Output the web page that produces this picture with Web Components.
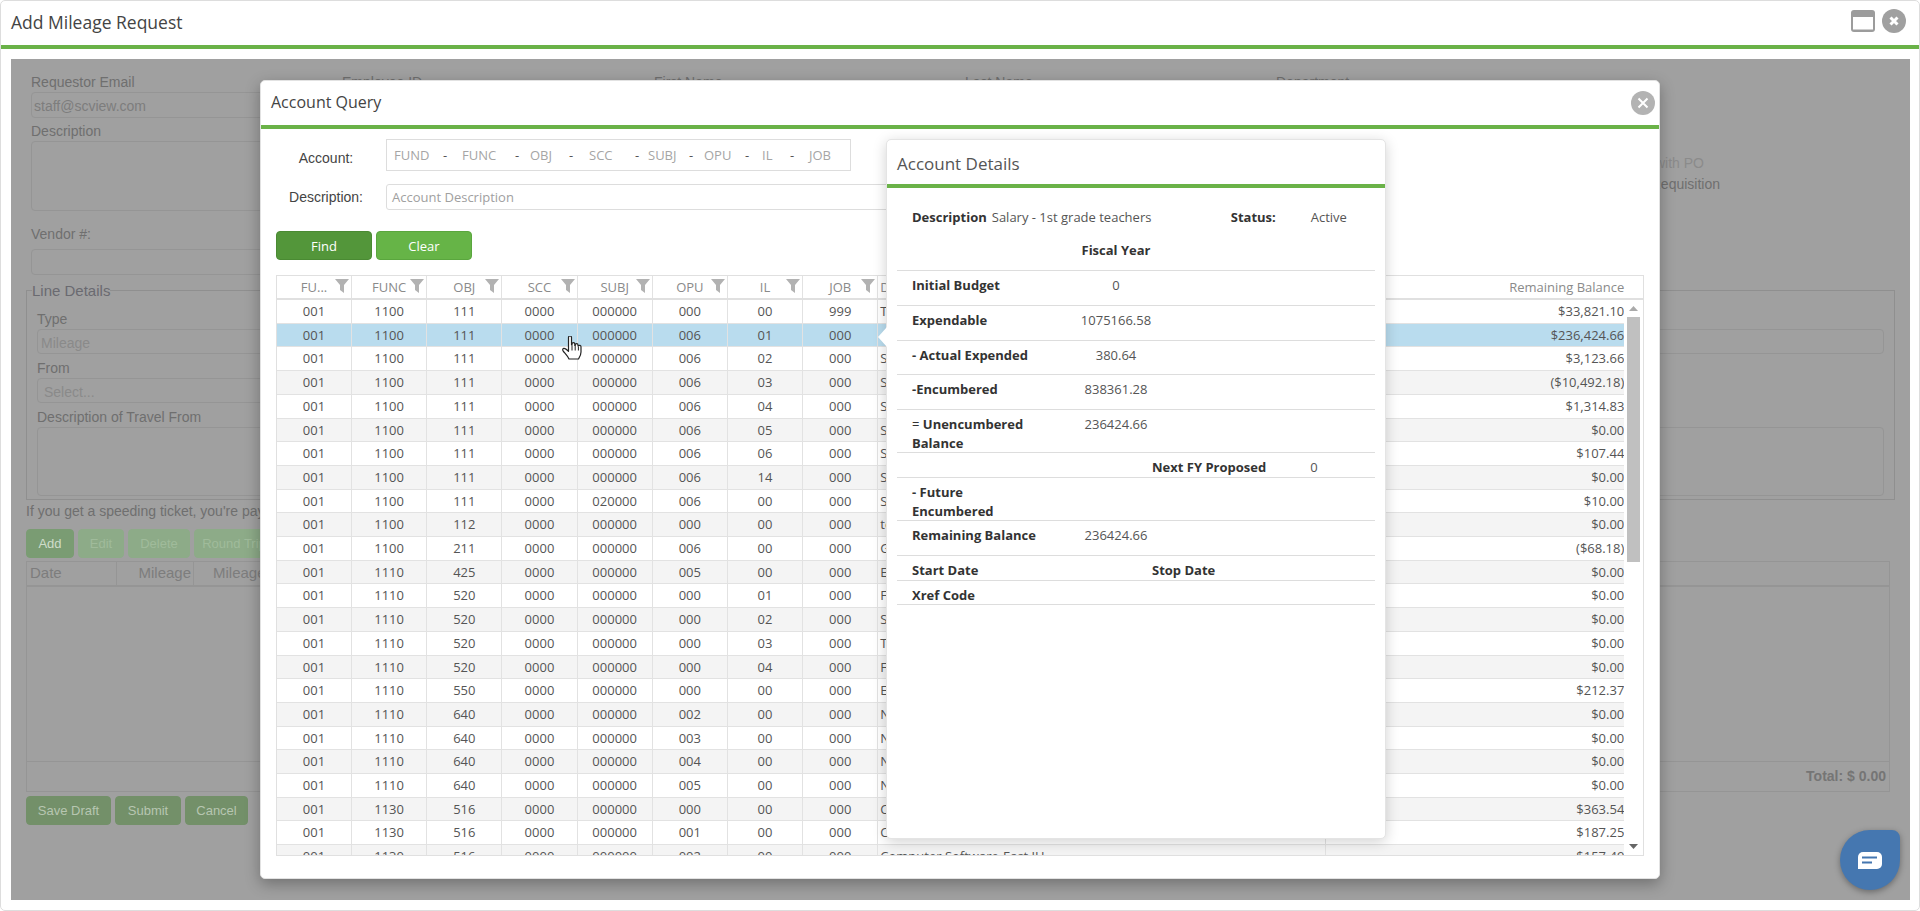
<!DOCTYPE html>
<html lang="en">
<head>
<meta charset="utf-8">
<title>Add Mileage Request</title>
<style>
  html, body { margin: 0; height: 100%; background: #fff; overflow: hidden; }
  body { font-family: "Open Sans", sans-serif; }
</style>
</head>
<body>
<app-window>
  <span slot="title">Add Mileage Request</span>
  <mileage-form></mileage-form>
  <account-query slot="overlay"></account-query>
  <chat-bubble slot="overlay"></chat-bubble>
</app-window>

<script>
class Base extends HTMLElement {
  constructor() {
    super();
    this.attachShadow({ mode: "open" });
  }
  connectedCallback() {
    this.shadowRoot.innerHTML = `<style>${this.constructor.css}</style>${this.render()}`;
  }
}

class AppWindow extends Base {
  render() {
    return `
      <header>
        <div class="title"><slot name="title"></slot></div>
        <svg width="24" height="22" viewBox="0 0 24 22"><rect width="24" height="22" rx="3" fill="#9c9c9c"/><rect x="2" y="7" width="20" height="12.500" fill="#fff"/></svg>
        <svg class="x" width="24" height="24" viewBox="0 0 24 24"><circle cx="12" cy="12" r="12" fill="#a0a0a0"/><path d="M8.500 8.500l7 7m0-7l-7 7" stroke="#fff" stroke-width="3"/></svg>
      </header>
      <main><slot></slot></main>
      <slot name="overlay"></slot>
    `;
  }
  static get css() {
    return `
      :host { display: flex; flex-direction: column; position: relative; box-sizing: border-box; height: 911px; border: 1px solid #ddd; border-radius: 5px; background: #fff; }
      header { height: 44px; flex: none; box-sizing: border-box; display: flex; align-items: center; padding: 0 13px 4px 10px; gap: 7px; }
      .title { flex: 1; font-size: 17.500px; color: #444; padding-top: 2px; }
      main { flex: 1; border-top: 4px solid #6ab248; padding: 10px 9px 10px 10px; display: flex; min-height: 0; }
    `;
  }
}

class GButton extends Base {
  render() { return `<slot></slot>`; }
  static get css() {
    return `
      :host { display: inline-flex; align-items: center; justify-content: center; box-sizing: border-box; height: 29px; border-radius: 4px; font-size: 13px; background: var(--bg, #66b447); color: var(--fg, #fff); border: 1px solid var(--edge, var(--bg, #5aa63e)); }
    `;
  }
}

class FormField extends Base {
  render() {
    const h = this.getAttribute("h") || 26;
    const gap = this.getAttribute("gap") || 0;
    return `<label>${this.getAttribute("label") || ""}</label><div class="box" style="height:${h}px;margin-top:${gap}px"><slot></slot></div>`;
  }
  static get css() {
    return `
      :host { display: block; font-family: "Liberation Sans", Arial, sans-serif; color: #6f6f6f; }
      label { display: block; height: 20px; line-height: 20px; font-size: 14px; }
      .box { box-sizing: border-box; border: 1px solid #959595; border-radius: 4px; font-size: 14px; padding: 2px 2px 0; display: flex; align-items: center; color: #7d7d7d; }
    `;
  }
}

class MileageForm extends Base {
  render() {
    return `
      <section class="top">
        <div class="stack">
          <form-field label="Requestor Email">staff@scview.com</form-field>
          <form-field label="Description" h="70"></form-field>
          <form-field class="vendor" label="Vendor #:" gap="5"></form-field>
        </div>
        <div class="lbl">Employee ID</div>
        <div class="lbl">First Name</div>
        <div class="lbl">Last Name</div>
        <div class="lbl">Department</div>
        <div class="req"><div class="faint">with PO</div><div>Requisition</div></div>
      </section>
      <fieldset>
        <legend>Line Details</legend>
        <div class="cols">
          <div>
            <form-field label="Type" h="25"><span class="ph">Mileage</span></form-field>
            <form-field label="From" h="25"><span class="ph sel">Select...</span></form-field>
            <form-field label="Description of Travel From" h="69"></form-field>
          </div>
          <div>
            <form-field h="25"></form-field>
            <form-field h="25" style="visibility:hidden"></form-field>
            <form-field h="69"></form-field>
          </div>
        </div>
      </fieldset>
      <p class="note">If you get a speeding ticket, you're paying</p>
      <div class="btns">
        <g-button style="width:48px;--bg:#7a9c73;--fg:#cfdccb">Add</g-button>
        <g-button style="width:46px;--bg:#8dab88;--fg:#a0bb9b">Edit</g-button>
        <g-button style="width:62px;--bg:#8dab88;--fg:#a0bb9b">Delete</g-button>
        <g-button style="width:80px;--bg:#8dab88;--fg:#a0bb9b">Round Trip</g-button>
      </div>
      <div class="tbl">
        <div class="head"><span style="width:90px;padding-left:3px">Date</span><span style="width:77px;text-align:right;padding-right:2px">Mileage</span><span style="padding-left:19px">Mileage</span></div>
        <div class="body"></div>
        <div class="total">Total: $ 0.00</div>
      </div>
      <div class="btns b2">
        <g-button style="width:85px;--bg:#739069;--fg:#b7c6b1">Save Draft</g-button>
        <g-button style="width:66px;--bg:#739069;--fg:#b7c6b1">Submit</g-button>
        <g-button style="width:63px;--bg:#739069;--fg:#b7c6b1">Cancel</g-button>
      </div>
    `;
  }
  static get css() {
    return `
      :host { display: block; flex: 1; background: #a0a0a0; font-family: "Liberation Sans", Arial, sans-serif; color: #6f6f6f; font-size: 14px; }
      .top { display: grid; grid-template-columns: 311px 312px 311px 311px 310px 134px; box-sizing: border-box; height: 222px; padding: 13px 0 0 20px; }
      .stack form-field + form-field { margin-top: 3px; }
      .stack .vendor { margin-top: 13px; }
      .lbl { line-height: 20px; }
      .req { text-align: right; padding-top: 81px; font-size: 14px; line-height: 21px; }
      .faint { color: #8b8b8b; padding-right: 16px; }
      fieldset { margin: 0 15px; padding: 10px 10px 3px; border: 1px solid #8f8f8f; min-width: 0; height: 219px; box-sizing: border-box; }
      legend { padding: 0; margin-left: -5px; height: 18px; line-height: 20px; font-size: 15px; color: #6a6a70; }
      .cols { display: grid; grid-template-columns: 1fr 1fr; }
      .cols form-field + form-field { margin-top: 4px; }
      .ph { color: #8a8a8a; font-size: 14px; padding-left: 1px; }
      .sel { padding-left: 4px; }
      .note { margin: 1px 0 0 15px; line-height: 20px; font-size: 14px; white-space: nowrap; }
      .btns { display: flex; gap: 4px; margin: 8px 0 0 15px; }
      .b2 { margin-top: 4px; }
      .tbl { margin: 3px 20px 0 15px; height: 231px; box-sizing: border-box; border: 1px solid #959595; display: flex; flex-direction: column; }
      .head { height: 25px; flex: none; box-sizing: border-box; border-bottom: 2px solid #959595; display: flex; align-items: center; font-size: 15px; }
      .head span { display: block; box-sizing: border-box; height: 100%; line-height: 22px; border-right: 1px solid #959595; color: #7d7d7d; }
      .head span:last-child { border: 0; }
      .body { flex: 1; border-bottom: 1px solid #959595; }
      .total { height: 29px; flex: none; line-height: 29px; text-align: right; padding-right: 3px; font-weight: bold; color: #757575; }
    `;
  }
}

const FIELDS = [["FUND", 49, 68], ["FUNC", 53, 68], ["OBJ", 39, 59], ["SCC", 46, 59], ["SUBJ", 41, 56], ["OPU", 41, 58], ["IL", 28, 47], ["JOB", 0, 0]];

class AccountQuery extends Base {
  render() {
    const segs = FIELDS.map(([name, off, w], i) => i < 7
      ? `<span style="width:${off}px">${name}</span><span class="dash" style="width:${w - off}px">-</span>`
      : `<span>${name}</span>`).join("");
    return `
      <header>
        <div class="title">Account Query</div>
        <svg width="24" height="24" viewBox="0 0 24 24"><circle cx="12" cy="12" r="12" fill="#b3b3b3"/><path d="M7.500 7.500l9 9m0-9l-9 9" stroke="#fff" stroke-width="2"/></svg>
      </header>
      <div class="content">
        <div class="row acct"><label>Account:</label><div class="segs">${segs}</div></div>
        <div class="row desc"><label>Description:</label><div class="in">Account Description</div></div>
        <div class="btns">
          <g-button style="width:96px;--bg:#53963a;--edge:#4a8a33">Find</g-button>
          <g-button style="width:96px;--bg:#66b447;--edge:#5aa63e">Clear</g-button>
        </div>
        <account-grid></account-grid>
      </div>
      <account-details></account-details>
      <svg class="hand" width="21" height="25" viewBox="0 0 21 25"><path d="M6.500 1.500a1.500 1.500 0 0 1 3 0V9h.5V8a1.400 1.400 0 0 1 2.800 0v1.500h.4V9a1.400 1.400 0 0 1 2.800 0v1h.4a1.400 1.400 0 0 1 2.600.7V16c0 3-1.500 5-2.500 7H7c-1-2.500-3-4.500-5.500-7.500-1.200-1.400-1-3 .3-3.200 1.200-.2 3 1.200 4.700 3z" fill="#fff" stroke="#222" stroke-width="1.200" stroke-linejoin="round"/><path d="M10 9.500v5M13.200 9.500v5M16.400 10.500v4" stroke="#222" fill="none"/></svg>
    `;
  }
  static get css() {
    return `
      :host { position: absolute; left: 259px; top: 79px; width: 1400px; height: 799px; box-sizing: border-box; background: #fff; border: 1px solid #e2e2e2; border-radius: 5px; box-shadow: 0 5px 15px rgba(0,0,0,.3); display: flex; flex-direction: column; }
      header { height: 44px; flex: none; border-bottom: 4px solid #6ab248; display: flex; align-items: center; padding: 0 4px 0 10px; box-sizing: content-box; }
      .title { flex: 1; font-size: 16px; color: #444; padding-bottom: 2px; }
      .content { padding: 10px 15px 0; display: flex; flex-direction: column; min-height: 0; }
      .row { display: flex; align-items: center; }
      label { width: 100px; margin-right: 10px; text-align: center; font: 14px "Liberation Sans", Arial, sans-serif; color: #444; }
      .acct label { padding-top: 6px; }
      .segs { box-sizing: border-box; width: 465px; height: 32px; border: 1px solid #ddd; display: flex; align-items: center; padding: 0 0 0 7px; font-size: 13px; color: #a5a5a5; }
      .dash { color: #555; }
      .desc { margin-top: 13px; }
      .in { box-sizing: border-box; width: 800px; height: 26px; line-height: 24px; border: 1px solid #ddd; border-radius: 3px; padding-left: 5px; font-size: 13px; color: #a0a0a0; }
      .btns { display: flex; gap: 4px; margin: 21px 0 15px; }
      account-grid { flex: none; }
      .hand { position: absolute; left: 301px; top: 255px; }
    `;
  }
}

const ROWS = [
  "1100 111 0000 000000 000 00 999|T|$33,821.10",
  "1100 111 0000 000000 006 01 000||$236,424.66",
  "1100 111 0000 000000 006 02 000|S|$3,123.66",
  "1100 111 0000 000000 006 03 000|S|($10,492.18)",
  "1100 111 0000 000000 006 04 000|S|$1,314.83",
  "1100 111 0000 000000 006 05 000|S|$0.00",
  "1100 111 0000 000000 006 06 000|S|$107.44",
  "1100 111 0000 000000 006 14 000|S|$0.00",
  "1100 111 0000 020000 006 00 000|S|$10.00",
  "1100 112 0000 000000 000 00 000|te|$0.00",
  "1100 211 0000 000000 006 00 000|G|($68.18)",
  "1110 425 0000 000000 005 00 000|E|$0.00",
  "1110 520 0000 000000 000 01 000|F|$0.00",
  "1110 520 0000 000000 000 02 000|S|$0.00",
  "1110 520 0000 000000 000 03 000|T|$0.00",
  "1110 520 0000 000000 000 04 000|F|$0.00",
  "1110 550 0000 000000 000 00 000|E|$212.37",
  "1110 640 0000 000000 002 00 000|N|$0.00",
  "1110 640 0000 000000 003 00 000|N|$0.00",
  "1110 640 0000 000000 004 00 000|N|$0.00",
  "1110 640 0000 000000 005 00 000|N|$0.00",
  "1130 516 0000 000000 000 00 000|C|$363.54",
  "1130 516 0000 000000 001 00 000|C|$187.25",
  "1130 516 0000 000000 002 00 000|Computer Software-East JH|$157.49",
];

class AccountGrid extends Base {
  render() {
    const funnel = `<svg viewBox="0 0 14 14" width="14" height="14"><path d="M0 0H14L9 6V14L5 11V6Z" fill="#b2b2b2"/></svg>`;
    const heads = ["FU...", "FUNC", "OBJ", "SCC", "SUBJ", "OPU", "IL", "JOB"]
      .map(h => `<div class="hc">${h}${funnel}</div>`).join("");
    const rows = ROWS.map((r, i) => {
      const [codes, desc, bal] = r.split("|");
      const cells = ["001", ...codes.split(" ")].map(c => `<div class="c">${c}</div>`).join("");
      const cls = i === 1 ? "sel" : i % 2 ? "alt" : "";
      return `<div class="r ${cls}">${cells}<div class="d">${desc}</div><div class="b">${bal}</div></div>`;
    }).join("");
    return `
      <div class="r head">${heads}<div class="d hd">D</div><div class="b hb">Remaining Balance</div><div></div></div>
      <div class="wrap">
        <div class="rows">${rows}</div>
        <div class="sb">
          <svg class="up" width="9" height="5"><path d="M0 5L4.500 0L9 5Z" fill="#aaa"/></svg>
          <div class="thumb"></div>
          <svg class="dn" width="9" height="5"><path d="M0 0L4.500 5L9 0Z" fill="#666"/></svg>
        </div>
      </div>
    `;
  }
  static get css() {
    return `
      :host { display: block; width: 1368px; height: 581px; box-sizing: border-box; border: 1px solid #e0e0e0; font-size: 13px; color: #555; overflow: hidden; }
      .r { display: grid; grid-template-columns: 75px repeat(7, 75.200px) 448px 299px; height: 23.710px; box-sizing: border-box; border-bottom: 1px solid #e2e2e2; line-height: 22px; }
      .head { grid-template-columns: 75px repeat(7, 75.200px) 448px 299px 19px; height: 24px; border-bottom: 2px solid #e0e0e0; color: #8a8a8a; }
      .hc { position: relative; text-align: center; border-right: 1px solid #e2e2e2; }
      .hc svg { position: absolute; right: 2px; top: 3px; }
      .c { text-align: center; border-right: 1px solid #e2e2e2; }
      .d { padding-left: 2px; white-space: nowrap; overflow: hidden; border-right: 1px solid #e2e2e2; }
      .b { text-align: right; padding-right: 1px; }
      .hd { border: 0; }
      .alt { background: #f4f4f4; }
      .sel { background: #b9dcee; }
      .wrap { display: flex; height: 555px; }
      .rows { width: 1347px; flex: none; overflow: hidden; }
      .sb { flex: 1; display: flex; flex-direction: column; align-items: center; position: relative; }
      .up { margin-top: 6px; }
      .thumb { width: 13px; height: 245px; background: #c0c0c0; margin-top: 6px; }
      .dn { position: absolute; bottom: 6px; left: 5px; }
    `;
  }
}

class DetailRow extends Base {
  render() {
    return `<slot name="label"></slot><slot name="value"></slot><slot name="extra"></slot><slot name="extra-value"></slot>`;
  }
  static get css() {
    return `
      :host { display: grid; grid-template-columns: 140px 100px 28px 100px 68px; box-sizing: border-box; height: var(--h, 35px); padding: 5px 0 0 15px; border-bottom: 1px solid #ddd; line-height: 19px; font-size: 13px; color: #555; }
      ::slotted([slot=label]) { grid-column: 1; font-weight: 700; color: #333; }
      ::slotted([slot=value]) { grid-column: 2 / 4; text-align: center; }
      ::slotted([slot=extra]) { grid-column: 3 / 5; font-weight: 700; color: #333; white-space: nowrap; }
      ::slotted([slot=extra-value]) { grid-column: 5; text-align: center; }
    `;
  }
}

class AccountDetails extends Base {
  render() {
    return `
      <i class="arrow"></i>
      <header>Account Details</header>
      <div class="content">
        <div class="top"><b>Description</b><span class="sal">Salary - 1st grade teachers</span><b class="st">Status:</b><span>Active</span></div>
        <detail-row style="--h:37px;padding-top:7px"><b slot="value" style="color:#333">Fiscal Year</b></detail-row>
        <detail-row><span slot="label">Initial Budget</span><span slot="value">0</span></detail-row>
        <detail-row><span slot="label">Expendable</span><span slot="value">1075166.58</span></detail-row>
        <detail-row style="--h:34px"><span slot="label">- Actual Expended</span><span slot="value">380.64</span></detail-row>
        <detail-row><span slot="label">-Encumbered</span><span slot="value">838361.28</span></detail-row>
        <detail-row style="--h:43px"><span slot="label"><span style="font-weight:400">=</span> Unencumbered Balance</span><span slot="value">236424.66</span></detail-row>
        <detail-row style="--h:25px"><span slot="extra">Next FY Proposed</span><span slot="extra-value">0</span></detail-row>
        <detail-row style="--h:43px"><span slot="label">- Future<br>Encumbered</span></detail-row>
        <detail-row><span slot="label">Remaining Balance</span><span slot="value">236424.66</span></detail-row>
        <detail-row style="--h:25px"><span slot="label">Start Date</span><span slot="extra">Stop Date</span></detail-row>
        <detail-row style="--h:24px"><span slot="label">Xref Code</span></detail-row>
      </div>
    `;
  }
  static get css() {
    return `
      :host { position: absolute; left: 625px; top: 58px; width: 500px; height: 700px; box-sizing: border-box; background: #fff; border: 1px solid #e4e4e4; border-radius: 5px; box-shadow: 0 3px 14px rgba(0,0,0,.18); display: flex; flex-direction: column; }
      .arrow { position: absolute; left: -9px; top: 187px; width: 0; height: 0; border: 10px solid transparent; border-left: 0; border-right: 9px solid #fff; }
      header { height: 44px; flex: none; box-sizing: content-box; border-bottom: 4px solid #6ab248; padding-left: 10px; line-height: 47px; font-size: 17px; color: #555; border-radius: 5px 5px 0 0; }
      .content { padding: 0 10px; }
      .top { height: 46px; box-sizing: border-box; padding: 19px 0 0 15px; display: flex; line-height: 20px; font-size: 13px; color: #555; white-space: nowrap; }
      .top b { color: #333; }
      .sal { margin-left: 5px; width: 239px; }
      .st { width: 80px; }
    `;
  }
}

class ChatBubble extends Base {
  render() {
    return `<svg width="24" height="17" viewBox="0 0 24 17"><path d="M5 0H19a5 5 0 0 1 5 5V12a5 5 0 0 1-5 5H0V5a5 5 0 0 1 5-5z" fill="#fff"/><path d="M4 5.500H19M4 10.500H14" stroke="#4577b0" stroke-width="2"/></svg>`;
  }
  static get css() {
    return `
      :host { position: absolute; left: 1839px; top: 829px; width: 60px; height: 60px; background: #4577b0; border-radius: 50% 8px 50% 50%; box-shadow: 0 2px 6px rgba(0,0,0,.35); display: flex; align-items: center; justify-content: center; }
    `;
  }
}

customElements.define("app-window", AppWindow);
customElements.define("g-button", GButton);
customElements.define("form-field", FormField);
customElements.define("mileage-form", MileageForm);
customElements.define("account-query", AccountQuery);
customElements.define("account-grid", AccountGrid);
customElements.define("detail-row", DetailRow);
customElements.define("account-details", AccountDetails);
customElements.define("chat-bubble", ChatBubble);
</script>
</body>
</html>
